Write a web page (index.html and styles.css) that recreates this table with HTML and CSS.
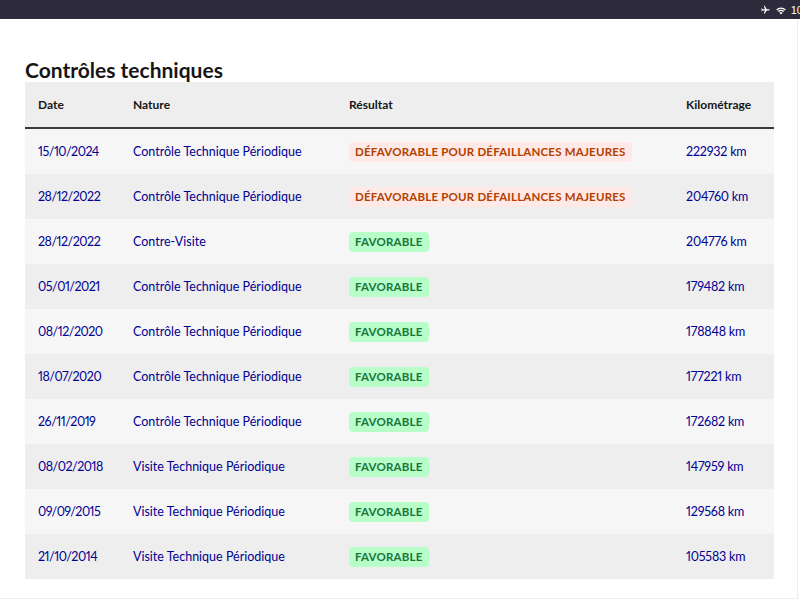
FILE: index.html
```html
<!DOCTYPE html>
<html lang="fr">
<head>
<meta charset="utf-8">
<title>Contrôles techniques</title>
<link rel="stylesheet" href="styles.css">
</head>
<body>
<div class="statusbar">
  <div class="status-icons">
    <svg class="ic" width="11" height="10" viewBox="0 0 24 24"><path fill="#fff" d="M21 16v-2l-8-5V3.5C13 2.7 12.3 2 11.5 2S10 2.7 10 3.5V9l-8 5v2l8-2.5V19l-2 1.5V22l3.5-1 3.5 1v-1.5L13 19v-5.5z" transform="rotate(90 12 12)"/></svg>
    <svg class="ic" width="12" height="10" viewBox="0 0 24 20"><path fill="#fff" d="M12 19l3.2-3.6a4.6 4.6 0 0 0-6.4 0zM5.6 12.2l1.9 2a6.4 6.4 0 0 1 9 0l1.9-2a9.2 9.2 0 0 0-12.8 0zM2.4 8.8l1.9 2a10.9 10.9 0 0 1 15.4 0l1.9-2a13.7 13.7 0 0 0-19.2 0z"/></svg>
    <span class="time">10</span>
  </div>
</div>
<main class="page">
  <h1 class="title">Contrôles techniques</h1>
  <div class="table">
    <div class="row head">
      <div class="cell">Date</div>
      <div class="cell">Nature</div>
      <div class="cell">Résultat</div>
      <div class="cell">Kilométrage</div>
    </div>
    <div class="row">
      <div class="cell date">15/10/2024</div>
      <div class="cell">Contrôle Technique Périodique</div>
      <div class="cell"><span class="badge bad">Défavorable pour défaillances majeures</span></div>
      <div class="cell km">222932 km</div>
    </div>
    <div class="row">
      <div class="cell date">28/12/2022</div>
      <div class="cell">Contrôle Technique Périodique</div>
      <div class="cell"><span class="badge bad">Défavorable pour défaillances majeures</span></div>
      <div class="cell km">204760 km</div>
    </div>
    <div class="row">
      <div class="cell date">28/12/2022</div>
      <div class="cell">Contre-Visite</div>
      <div class="cell"><span class="badge ok">Favorable</span></div>
      <div class="cell km">204776 km</div>
    </div>
    <div class="row">
      <div class="cell date">05/01/2021</div>
      <div class="cell">Contrôle Technique Périodique</div>
      <div class="cell"><span class="badge ok">Favorable</span></div>
      <div class="cell km">179482 km</div>
    </div>
    <div class="row">
      <div class="cell date">08/12/2020</div>
      <div class="cell">Contrôle Technique Périodique</div>
      <div class="cell"><span class="badge ok">Favorable</span></div>
      <div class="cell km">178848 km</div>
    </div>
    <div class="row">
      <div class="cell date">18/07/2020</div>
      <div class="cell">Contrôle Technique Périodique</div>
      <div class="cell"><span class="badge ok">Favorable</span></div>
      <div class="cell km">177221 km</div>
    </div>
    <div class="row">
      <div class="cell date">26/11/2019</div>
      <div class="cell">Contrôle Technique Périodique</div>
      <div class="cell"><span class="badge ok">Favorable</span></div>
      <div class="cell km">172682 km</div>
    </div>
    <div class="row">
      <div class="cell date">08/02/2018</div>
      <div class="cell">Visite Technique Périodique</div>
      <div class="cell"><span class="badge ok">Favorable</span></div>
      <div class="cell km">147959 km</div>
    </div>
    <div class="row">
      <div class="cell date">09/09/2015</div>
      <div class="cell">Visite Technique Périodique</div>
      <div class="cell"><span class="badge ok">Favorable</span></div>
      <div class="cell km">129568 km</div>
    </div>
    <div class="row">
      <div class="cell date">21/10/2014</div>
      <div class="cell">Visite Technique Périodique</div>
      <div class="cell"><span class="badge ok">Favorable</span></div>
      <div class="cell km">105583 km</div>
    </div>
  </div>
</main>
</body>
</html>
```
FILE: styles.css
```css
* { box-sizing: border-box; }
html, body {
  margin: 0;
  padding: 0;
  background: #fff;
  font-family: Lato, "Noto Sans", "Liberation Sans", sans-serif;
}
body {
  width: 800px;
  height: 600px;
  overflow: hidden;
}
.statusbar {
  height: 19px;
  background: #2c2a3b;
  display: flex;
  justify-content: flex-end;
  align-items: center;
  overflow: hidden;
}
.status-icons {
  display: flex;
  align-items: center;
  gap: 4px;
  margin-right: -3px;
}
.ic { display: block; }
.time {
  color: #fff;
  font-size: 11px;
  font-family: "Liberation Sans", sans-serif;
}
.page {
  width: 798px;
  height: 580px;
  border-right: 1px solid #eeeeee;
  border-bottom: 1px solid #eeeeee;
  padding: 39px 0 0 25px;
}
.title {
  margin: 0;
  font-size: 21px;
  line-height: 24px;
  font-weight: 700;
  color: #161616;
}
.table {
  width: 749px;
}
.row {
  display: grid;
  grid-template-columns: 95px 216px 337px 1fr;
  align-items: center;
  height: 45px;
  background: #f6f6f6;
  font-size: 12.5px;
  color: #000091;
  font-variant-numeric: proportional-nums;
}
.row:nth-child(odd) { background: #eeeeee; }
.row.head {
  background: #eeeeee;
  height: 47px;
  border-bottom: 2px solid #3a3a3a;
  color: #161616;
  font-weight: 700;
  font-size: 12px;
}
.cell {
  padding-left: 13px;
  white-space: nowrap;
}
.cell.date { letter-spacing: -0.5px; }
.cell.km { letter-spacing: -0.2px; }
.badge {
  display: inline-block;
  height: 20px;
  line-height: 20px;
  padding: 0 6px;
  border-radius: 4px;
  font-weight: 700;
  font-size: 11.5px;
  text-transform: uppercase;
  letter-spacing: 0.2px;
}
.badge.bad { background: #ffe9e6; color: #b34000; }
.badge.ok { background: #b8fec9; color: #18753c; }
```
